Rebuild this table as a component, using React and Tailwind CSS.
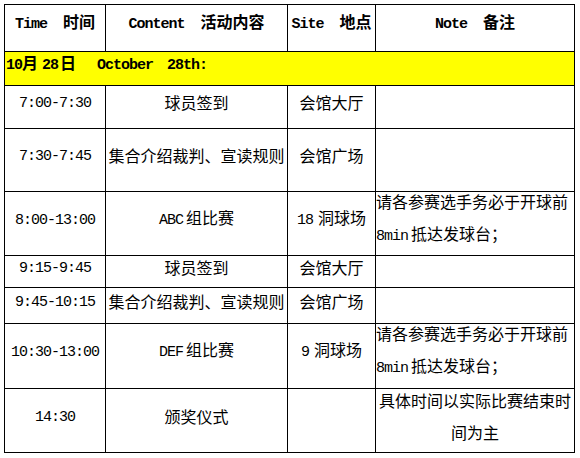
const cjk = '"Noto Sans CJK SC", "Liberation Sans", sans-serif';

function L({ children, className = "" }) {
    return (
        <span
            className={"text-[15px] tracking-[-1px] whitespace-pre " + className}
            style={{ fontFamily: '"Liberation Mono", monospace' }}
        >
            {children}
        </span>
    );
}

function Cell({ children, className = "", left = false }) {
    return (
        <div
            className={
                "border-r border-b border-black flex items-center pb-[10px] leading-[32px] " +
                (left ? "justify-start " : "justify-center text-center ") +
                className
            }
        >
            <div className="w-full">{children}</div>
        </div>
    );
}

const rows = [
    { time: "7:00-7:30", content: "球员签到", site: "会馆大厅" },
    { time: "7:30-7:45", content: "集合介绍裁判、宣读规则", site: "会馆广场" },
    {
        time: "8:00-13:00",
        content: (
            <>
                <L>ABC</L>
                <span className="ml-[3px]">组比赛</span>
            </>
        ),
        site: (
            <>
                <L>18</L>
                <span className="ml-[5px]">洞球场</span>
            </>
        ),
        note: "arrive",
    },
    { time: "9:15-9:45", content: "球员签到", site: "会馆大厅" },
    { time: "9:45-10:15", content: "集合介绍裁判、宣读规则", site: "会馆广场" },
    {
        time: "10:30-13:00",
        content: (
            <>
                <L>DEF</L>
                <span className="ml-[3px]">组比赛</span>
            </>
        ),
        site: (
            <>
                <L>9</L>
                <span className="ml-[5px]">洞球场</span>
            </>
        ),
        note: "arrive",
    },
    { time: "14:30", content: "颁奖仪式", site: "", note: "end" },
];

function Note({ kind }) {
    if (kind === "arrive") {
        return (
            <Cell left>
                <div>请各参赛选手务必于开球前</div>
                <div>
                    <L>8min</L>
                    <span className="ml-[3px]">抵达发球台；</span>
                </div>
            </Cell>
        );
    }
    if (kind === "end") {
        return (
            <Cell>
                <div>具体时间以实际比赛结束时</div>
                <div>间为主</div>
            </Cell>
        );
    }
    return <Cell />;
}

export default function App() {
    return (
        <div className="w-[580px] h-[458px] bg-white pt-[4px] pl-[4px] text-black text-[16px]" style={{ fontFamily: cjk }}>
            <div className="w-[571px] grid grid-cols-[101px_182px_88px_199px] grid-rows-[47px_34px_43px_63px_64px_32px_36px_65px_64px] border-l border-t border-black">
                <Cell className="font-bold">
                    <L className="font-bold">Time  </L>时间
                </Cell>
                <Cell className="font-bold">
                    <L className="font-bold">Content  </L>活动内容
                </Cell>
                <Cell className="font-bold">
                    <L className="font-bold">Site  </L>地点
                </Cell>
                <Cell className="font-bold">
                    <L className="font-bold">Note  </L>备注
                </Cell>

                <div className="col-span-4 bg-[#ffff00] border-r border-b border-black flex items-center pb-[10px] leading-[32px] font-bold">
                    <div>
                        <L className="font-bold ml-[1px]">10</L>
                        <span>月</span>
                        <L className="font-bold ml-[4px]">28</L>
                        <span className="ml-[2px]">日</span>
                        <L className="font-bold ml-[21px]">October</L>
                        <L className="font-bold ml-[14px]">28th:</L>
                    </div>
                </div>

                {rows.map((r, i) => (
                    <div key={i} className="contents">
                        <Cell>
                            <L>{r.time}</L>
                        </Cell>
                        <Cell>{r.content}</Cell>
                        <Cell>{r.site}</Cell>
                        <Note kind={r.note} />
                    </div>
                ))}
            </div>
        </div>
    );
}
